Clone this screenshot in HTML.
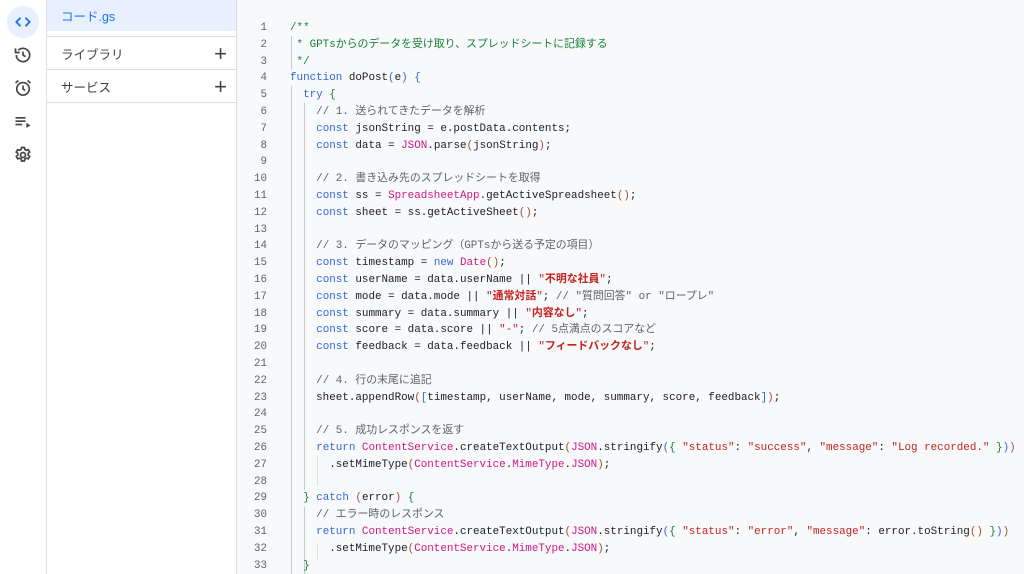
<!DOCTYPE html>
<html><head><meta charset="utf-8"><style>
*{margin:0;padding:0;box-sizing:border-box}
body{width:1024px;height:574px;overflow:hidden;background:#fff;font-family:"Liberation Sans","Noto Sans CJK JP",sans-serif;position:relative}
#rail{position:absolute;left:0;top:0;width:47px;height:574px;border-right:1px solid #e0e0e0;background:#fff}
.ic{position:absolute;left:7px;width:32px;height:32px;display:flex;align-items:center;justify-content:center}
#files{position:absolute;left:47px;top:0;width:190px;height:574px;border-right:1px solid #dadce0;background:#fff}
.row{position:absolute;left:0;width:189px;font-size:12.5px;color:#3c4043;padding-left:14px;display:flex;align-items:center}
#ed{position:absolute;left:237px;top:0;width:787px;height:574px;background:#f8f9fa}
.ln{position:absolute;left:0;width:30px;height:16px;line-height:16px;text-align:right;font:10.8px/16px "Liberation Mono",monospace;color:#5f6368;overflow:visible}
.cd{position:absolute;left:53px;height:16px;white-space:pre;font:10.9px/16px "Liberation Mono","Noto Sans CJK JP",monospace;color:#202124}
.cd span,.cd b{line-height:16px}
.k{color:#3367d6}.c{color:#188038}.g{color:#5f6368}.s{color:#c5221f}.m{color:#d01884}.p{color:#a0522d}.b{color:#3367d6}.gr{color:#188038}
.guide{position:absolute;width:1px;background:#c8c8c8}
</style></head><body>
<div id="rail">
 <div class="ic" style="top:6px;background:#e8f0fe;border-radius:50%"><svg width="20" height="20" viewBox="0 0 24 24" fill="none" stroke="#1a73e8" stroke-width="2.2"><path d="M9 7l-5 5 5 5M15 7l5 5-5 5"/></svg></div>
 <div class="ic" style="top:39px"><svg width="20" height="20" viewBox="0 0 24 24" fill="none" stroke="#444" stroke-width="2"><path d="M4 12a8 8 0 1 0 2.3-5.6"/><path d="M3 4v5h5"/><path d="M12 8v4l3 2"/></svg></div>
 <div class="ic" style="top:72px"><svg width="20" height="20" viewBox="0 0 24 24" fill="none" stroke="#444" stroke-width="2"><circle cx="12" cy="13" r="7.5"/><path d="M12 9v4l2.5 2M3 6l3.5-3M21 6l-3.5-3"/></svg></div>
 <div class="ic" style="top:106px"><svg width="20" height="20" viewBox="0 0 24 24" fill="#444"><rect x="3" y="6" width="12" height="2"/><rect x="3" y="10" width="12" height="2"/><rect x="3" y="14" width="8" height="2"/><path d="M16 13l5 3-5 3z"/></svg></div>
 <div class="ic" style="top:139px"><svg width="20" height="20" viewBox="0 0 24 24" fill="none" stroke="#444" stroke-width="2"><circle cx="12" cy="12" r="3"/><path d="M10.3 3h3.4l.5 2.4 1.8 1 2.3-.8 1.7 2.9-1.8 1.6v2l1.8 1.6-1.7 2.9-2.3-.8-1.8 1-.5 2.4h-3.4l-.5-2.4-1.8-1-2.3.8-1.7-2.9 1.8-1.6v-2L3.9 8.5l1.7-2.9 2.3.8 1.8-1z"/></svg></div>
</div>
<div id="files">
 <div class="row" style="top:0;height:31px;background:#e8f0fe;color:#1a73e8">コード.gs</div>
 <div style="position:absolute;top:36px;left:0;width:189px;height:1px;background:#dadce0"></div>
 <div class="row" style="top:37px;height:33px">ライブラリ<span style="position:absolute;right:9px;font-size:22px;font-weight:300;color:#444">+</span></div>
 <div style="position:absolute;top:69px;left:0;width:189px;height:1px;background:#dadce0"></div>
 <div class="row" style="top:70px;height:33px">サービス<span style="position:absolute;right:9px;font-size:22px;font-weight:300;color:#444">+</span></div>
 <div style="position:absolute;top:102px;left:0;width:189px;height:1px;background:#dadce0"></div>
</div>
<div id="ed">
<div class="guide" style="left:54px;top:36px;height:34px"></div>
<div class="guide" style="left:54px;top:86px;height:488px"></div>
<div class="guide" style="left:67px;top:103px;height:387px"></div>
<div class="guide" style="left:67px;top:507px;height:67px"></div>
<div class="guide" style="left:80px;top:456px;height:30px;background:#ddd"></div>
<div class="guide" style="left:80px;top:543px;height:16px;background:#ddd"></div>
</div>
<div style="position:absolute;left:237px;top:2px">
<div class="ln" style="top:18px">1</div><div class="cd" style="top:18px"><span class="c">/**</span></div>
<div class="ln" style="top:35px">2</div><div class="cd" style="top:35px"><span class="c"> * GPTsからのデータを受け取り、スプレッドシートに記録する</span></div>
<div class="ln" style="top:52px">3</div><div class="cd" style="top:52px"><span class="c"> */</span></div>
<div class="ln" style="top:68px">4</div><div class="cd" style="top:68px"><span class="k">function</span> doPost<span class="b">(</span>e<span class="b">)</span> <span class="b">{</span></div>
<div class="ln" style="top:85px">5</div><div class="cd" style="top:85px">  <span class="k">try</span> <span class="gr">{</span></div>
<div class="ln" style="top:102px">6</div><div class="cd" style="top:102px">    <span class="g">// 1. 送られてきたデータを解析</span></div>
<div class="ln" style="top:119px">7</div><div class="cd" style="top:119px">    <span class="k">const</span> jsonString = e.postData.contents;</div>
<div class="ln" style="top:136px">8</div><div class="cd" style="top:136px">    <span class="k">const</span> data = <span class="m">JSON</span>.parse<span class="p">(</span>jsonString<span class="p">)</span>;</div>
<div class="ln" style="top:152px">9</div>
<div class="ln" style="top:169px">10</div><div class="cd" style="top:169px">    <span class="g">// 2. 書き込み先のスプレッドシートを取得</span></div>
<div class="ln" style="top:186px">11</div><div class="cd" style="top:186px">    <span class="k">const</span> ss = <span class="m">SpreadsheetApp</span>.getActiveSpreadsheet<span class="p">()</span>;</div>
<div class="ln" style="top:203px">12</div><div class="cd" style="top:203px">    <span class="k">const</span> sheet = ss.getActiveSheet<span class="p">()</span>;</div>
<div class="ln" style="top:220px">13</div>
<div class="ln" style="top:236px">14</div><div class="cd" style="top:236px">    <span class="g">// 3. データのマッピング（GPTsから送る予定の項目）</span></div>
<div class="ln" style="top:253px">15</div><div class="cd" style="top:253px">    <span class="k">const</span> timestamp = <span class="k">new</span> <span class="m">Date</span><span class="p">()</span>;</div>
<div class="ln" style="top:270px">16</div><div class="cd" style="top:270px">    <span class="k">const</span> userName = data.userName || <span class="s">"<b>不明な社員</b>"</span>;</div>
<div class="ln" style="top:287px">17</div><div class="cd" style="top:287px">    <span class="k">const</span> mode = data.mode || <span class="s">"<b>通常対話</b>"</span>; <span class="g">// "質問回答" or "ロープレ"</span></div>
<div class="ln" style="top:304px">18</div><div class="cd" style="top:304px">    <span class="k">const</span> summary = data.summary || <span class="s">"<b>内容なし</b>"</span>;</div>
<div class="ln" style="top:320px">19</div><div class="cd" style="top:320px">    <span class="k">const</span> score = data.score || <span class="s">"-"</span>; <span class="g">// 5点満点のスコアなど</span></div>
<div class="ln" style="top:337px">20</div><div class="cd" style="top:337px">    <span class="k">const</span> feedback = data.feedback || <span class="s">"<b>フィードバックなし</b>"</span>;</div>
<div class="ln" style="top:354px">21</div>
<div class="ln" style="top:371px">22</div><div class="cd" style="top:371px">    <span class="g">// 4. 行の末尾に追記</span></div>
<div class="ln" style="top:388px">23</div><div class="cd" style="top:388px">    sheet.appendRow<span class="p">(</span><span class="b">[</span>timestamp, userName, mode, summary, score, feedback<span class="b">]</span><span class="p">)</span>;</div>
<div class="ln" style="top:404px">24</div>
<div class="ln" style="top:421px">25</div><div class="cd" style="top:421px">    <span class="g">// 5. 成功レスポンスを返す</span></div>
<div class="ln" style="top:438px">26</div><div class="cd" style="top:438px">    <span class="k">return</span> <span class="m">ContentService</span>.createTextOutput<span class="p">(</span><span class="m">JSON</span>.stringify<span class="b">(</span><span class="gr">{</span> <span class="s">"status"</span>: <span class="s">"success"</span>, <span class="s">"message"</span>: <span class="s">"Log recorded."</span> <span class="gr">}</span><span class="b">)</span><span class="p">)</span></div>
<div class="ln" style="top:455px">27</div><div class="cd" style="top:455px">      .setMimeType<span class="p">(</span><span class="m">ContentService</span>.<span class="m">MimeType</span>.<span class="m">JSON</span><span class="p">)</span>;</div>
<div class="ln" style="top:472px">28</div>
<div class="ln" style="top:488px">29</div><div class="cd" style="top:488px">  <span class="gr">}</span> <span class="k">catch</span> <span class="p">(</span>error<span class="p">)</span> <span class="gr">{</span></div>
<div class="ln" style="top:505px">30</div><div class="cd" style="top:505px">    <span class="g">// エラー時のレスポンス</span></div>
<div class="ln" style="top:522px">31</div><div class="cd" style="top:522px">    <span class="k">return</span> <span class="m">ContentService</span>.createTextOutput<span class="p">(</span><span class="m">JSON</span>.stringify<span class="b">(</span><span class="gr">{</span> <span class="s">"status"</span>: <span class="s">"error"</span>, <span class="s">"message"</span>: error.toString<span class="p">()</span> <span class="gr">}</span><span class="b">)</span><span class="p">)</span></div>
<div class="ln" style="top:539px">32</div><div class="cd" style="top:539px">      .setMimeType<span class="p">(</span><span class="m">ContentService</span>.<span class="m">MimeType</span>.<span class="m">JSON</span><span class="p">)</span>;</div>
<div class="ln" style="top:556px">33</div><div class="cd" style="top:556px">  <span class="gr">}</span></div>
</div>
</body></html>
